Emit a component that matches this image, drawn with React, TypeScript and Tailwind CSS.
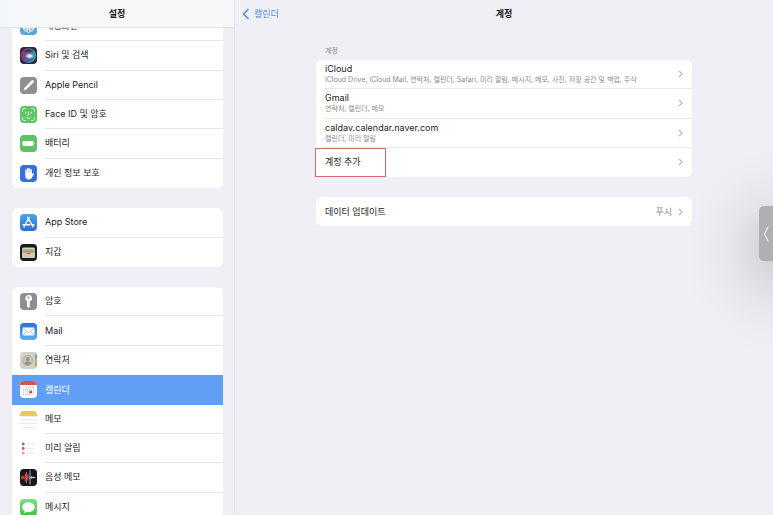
import type { ReactNode } from "react";
import clsx from "clsx";

type Item = { label: string; icon: ReactNode; active?: boolean };

const Icon = ({ children, className }: { children: ReactNode; className?: string }) => (
  <svg viewBox="0 0 34 34" aria-hidden="true" className={clsx("size-[17px] shrink-0 overflow-hidden rounded-[4px]", className)}>
    {children}
  </svg>
);

const WallpaperIcon = () => (
  <Icon className="bg-[#55a9d8]">
    <g fill="none" stroke="#fff" strokeWidth="1.8">
      <circle cx="17" cy="17" r="4" />
      <ellipse cx="17" cy="9" rx="4" ry="5" />
      <ellipse cx="17" cy="24" rx="4" ry="5" />
      <ellipse cx="9" cy="17" rx="5" ry="4" />
      <ellipse cx="25" cy="17" rx="5" ry="4" />
      <circle cx="11.5" cy="22" r="4" />
      <circle cx="22.5" cy="22" r="4" />
    </g>
  </Icon>
);

const SiriIcon = () => (
  <Icon>
    <defs>
      <radialGradient id="siriGlow">
        <stop offset="0" stopColor="#fff" />
        <stop offset="0.4" stopColor="#cfe2f4" stopOpacity="0.9" />
        <stop offset="1" stopColor="#5580b8" stopOpacity="0" />
      </radialGradient>
      <linearGradient id="siriBall" x1="0" y1="0" x2="1" y2="0.3">
        <stop offset="0" stopColor="#c22a66" />
        <stop offset="0.5" stopColor="#5a5088" />
        <stop offset="1" stopColor="#2fae9c" />
      </linearGradient>
    </defs>
    <rect width="34" height="34" fill="#33273c" />
    <circle cx="17" cy="17" r="15" fill="url(#siriBall)" />
    <path d="M8 8c5-4 13-4 18 0-6 3-12 3-18 0z" fill="#2a2c48" opacity="0.7" />
    <path d="M5 22c8 3 16 2 24-2-3 10-19 14-24 2z" fill="#3a62b4" opacity="0.85" />
    <ellipse cx="19" cy="18" rx="11" ry="7" fill="url(#siriGlow)" />
  </Icon>
);

const PencilIcon = () => (
  <Icon className="bg-[#8e8e93]">
    <path d="M7 27l2-5.5L23 7.200a2.800 2.800 0 0 1 4 4L12.500 25z" fill="#fff" />
  </Icon>
);

const FaceIcon = () => (
  <Icon className="bg-[#5ec466]">
    <g fill="none" stroke="#e9ffe9" strokeWidth="1.6" strokeLinecap="round">
      <path d="M5 11V8a3 3 0 0 1 3-3h3M23 5h3a3 3 0 0 1 3 3v3M29 23v3a3 3 0 0 1-3 3h-3M11 29H8a3 3 0 0 1-3-3v-3" />
      <path d="M11.5 12v3M22.5 12v3M17.5 12v6.5h-2M12 22.5c3 3 7 3 10 0" />
    </g>
  </Icon>
);

const BatteryIcon = () => (
  <Icon className="bg-[#5fc267]">
    <rect x="5" y="12" width="22" height="10" rx="2.5" fill="#fff" />
    <path d="M28.5 15v4c1.500-.5 1.500-3.500 0-4z" fill="#fff" />
  </Icon>
);

const HandIcon = () => (
  <Icon className="bg-[#3272d9]">
    <g stroke="#fff" strokeWidth="3" strokeLinecap="round">
      <path d="M12 18V10M15.500 17V7.500M19 17V7.500M22.500 18v-8" />
    </g>
    <path d="M10.500 16H24v3l2-2.500c1.500-1 2.500.5 2 1.500l-4 7c-2 4-5 4-7 4-4 0-6.500-3-6.500-7z" fill="#fff" />
  </Icon>
);

const AppStoreIcon = () => (
  <Icon className="bg-linear-to-b from-[#48a5e8] to-[#2b6fd6]">
    <g stroke="#fff" strokeWidth="2.800" strokeLinecap="round" fill="none">
      <path d="M18.500 7L10.500 21M15.500 7l10.500 18.500M6 21.500h13.500M24 21.500h4M8.800 24.500L8 26" />
    </g>
  </Icon>
);

const WalletIcon = () => (
  <Icon className="bg-[#1b1a18]">
    <rect x="4" y="7" width="26" height="21" rx="3" fill="#d8d3c0" />
    <path d="M5 10h24v3H5z" fill="#9bb3a4" />
    <path d="M5 13h24v3H5z" fill="#7fa865" />
    <path d="M5 16h24v3H5z" fill="#d9a35a" />
    <path d="M4 18h7c2 0 2 3 6 3s4-3 6-3h7v7a3 3 0 0 1-3 3H7a3 3 0 0 1-3-3z" fill="#cfcabb" />
    <path d="M12 18h10c-1 3.500-9 3.500-10 0z" fill="#cf6250" />
  </Icon>
);

const KeyIcon = () => (
  <Icon className="bg-[#8e8e93]">
    <path
      d="M17 4a6.500 6.500 0 0 0-3 12.200V27l3 3 3.500-3.500-2-2 2-2.500-1.500-2 1-3.500A6.500 6.500 0 0 0 17 4zm0 3a2 2 0 1 1 0 4 2 2 0 0 1 0-4z"
      fill="#fff"
      fillRule="evenodd"
    />
  </Icon>
);

const MailIcon = () => (
  <Icon className="bg-linear-to-b from-[#2f6fd6] to-[#52b4f0]">
    <rect x="5" y="9" width="24" height="16" rx="2.500" fill="#fff" />
    <path d="M6 10.500l9 8q2 1.700 4 0l9-8M6 24l7-7M28 24l-7-7" fill="none" stroke="#7db0e8" strokeWidth="1.300" />
  </Icon>
);

const ContactsIcon = () => (
  <Icon className="bg-[#d3d1c5]">
    <path d="M30 0h4v6h-4z" fill="#b5b4ac" />
    <path d="M30 6h4v8h-4z" fill="#5fa8d8" />
    <path d="M30 14h4v8h-4z" fill="#e8a54c" />
    <path d="M30 22h4v7h-4z" fill="#7cc07c" />
    <circle cx="15.500" cy="17" r="10" fill="#c9c7bb" stroke="#a3a196" strokeWidth="1.300" />
    <circle cx="15.500" cy="14" r="3.800" fill="#98968c" />
    <path d="M8.500 23c1-6 13-6 14 0-3 4.500-11 4.500-14 0z" fill="#98968c" />
  </Icon>
);

const CalendarIcon = () => (
  <Icon className="bg-white">
    <path d="M0 0h34v8H0z" fill="#df5247" />
    <g fill="none" stroke="#a9a9ae" strokeWidth="2" strokeDasharray="2 2">
      <path d="M6 17.500h23M6 22h23M6 26.500h15" />
    </g>
    <path d="M12 12.500h17" stroke="#e9a09b" strokeWidth="2" strokeDasharray="2 2" />
    <circle cx="21.500" cy="22" r="3" fill="#df4035" />
  </Icon>
);

const NotesIcon = () => (
  <Icon className="bg-[#fdfdfb]">
    <path d="M0 0h34v10H0z" fill="#e8cb5c" />
    <path d="M0 11h34" stroke="#cfc9b4" strokeWidth="1" strokeDasharray="1.500 1.500" />
    <path d="M0 17.500h34M0 25h34M0 33h34" stroke="#dededc" strokeWidth="1.300" />
  </Icon>
);

const RemindersIcon = () => (
  <Icon className="bg-white">
    <path d="M12 8h19M12 17h19M12 26h19" stroke="#dcdce0" strokeWidth="1.300" />
    <circle cx="6.500" cy="8" r="2.800" fill="#5874b8" />
    <circle cx="6.500" cy="17" r="2.800" fill="#cf5a50" />
    <circle cx="6.500" cy="26" r="2.800" fill="#f0a078" />
  </Icon>
);

const VoiceIcon = () => (
  <Icon className="bg-[#17171b]">
    <path d="M3 15v4M5.500 13v8M8 14v6M10.500 9v16M13 6v22M15.500 11v12M18 14v6" stroke="#dc544c" strokeWidth="2" />
    <path d="M20 3v28" stroke="#a9cdea" strokeWidth="1.800" />
    <path d="M20 17h11M23.500 14v6M27 15.500v3" stroke="#dedee2" strokeWidth="1.500" />
  </Icon>
);

const MessagesIcon = () => (
  <Icon className="bg-linear-to-b from-[#7ee07b] to-[#43bf4d]">
    <path
      d="M17 6.500c-7 0-12.500 4.300-12.500 9.800 0 3.500 2 6.300 5 8-.3 1.700-1 2.700-2 3.700 2.500 0 4.300-1 5.700-2.300 1.200.3 2.500.4 3.800.4 7 0 12.500-4.300 12.500-9.800S24 6.500 17 6.500z"
      fill="#fff"
    />
  </Icon>
);

const general: Item[] = [
  { label: "배경화면", icon: <WallpaperIcon /> },
  { label: "Siri 및 검색", icon: <SiriIcon /> },
  { label: "Apple Pencil", icon: <PencilIcon /> },
  { label: "Face ID 및 암호", icon: <FaceIcon /> },
  { label: "배터리", icon: <BatteryIcon /> },
  { label: "개인 정보 보호", icon: <HandIcon /> },
];

const store: Item[] = [
  { label: "App Store", icon: <AppStoreIcon /> },
  { label: "지갑", icon: <WalletIcon /> },
];

const apps: Item[] = [
  { label: "암호", icon: <KeyIcon /> },
  { label: "Mail", icon: <MailIcon /> },
  { label: "연락처", icon: <ContactsIcon /> },
  { label: "캘린더", icon: <CalendarIcon />, active: true },
  { label: "메모", icon: <NotesIcon /> },
  { label: "미리 알림", icon: <RemindersIcon /> },
  { label: "음성 메모", icon: <VoiceIcon /> },
  { label: "메시지", icon: <MessagesIcon /> },
];

const accounts = [
  {
    name: "iCloud",
    detail: "iCloud Drive, iCloud Mail, 연락처, 캘린더, Safari, 미리 알림, 메시지, 메모, 사진, 저장 공간 및 백업, 주식",
  },
  { name: "Gmail", detail: "연락처, 캘린더, 메모" },
  { name: "caldav.calendar.naver.com", detail: "캘린더, 미리 알림" },
];

const Chevron = () => (
  <svg viewBox="0 0 6 10" aria-hidden="true" className="h-2 w-[5px] shrink-0 fill-none stroke-[#b9b9be]">
    <path d="M1 1l4 4-4 4" strokeWidth="1.500" />
  </svg>
);

const MenuGroup = ({ items, className }: { items: Item[]; className: string }) => (
  <ul className={clsx("flex shrink-0 flex-col overflow-hidden rounded-md bg-white", className)}>
    {items.map((item, i) => (
      <li key={item.label} className="flex-1">
        <a href="#" className={clsx("flex h-full items-center gap-2 pl-2", item.active && "bg-[#619ff7] text-white")}>
          {item.icon}
          <span
            className={clsx(
              "flex h-full flex-1 items-center",
              i < items.length - 1 && !item.active && !items[i + 1].active && "border-b border-[#e6e6e9]"
            )}
          >
            {item.label}
          </span>
        </a>
      </li>
    ))}
  </ul>
);

const Sidebar = () => (
  <aside className="flex w-[235px] shrink-0 flex-col border-r border-[#e2e1e7]">
    <header className="z-10 flex h-7 shrink-0 items-center justify-center border-b border-[#e3e3e6] bg-linear-to-r from-[#f3f7fb] via-[#f8f8f9] via-30% to-[#f8f8f9]">
      <h1 className="font-semibold">설정</h1>
    </header>
    <nav className="-mt-4 flex min-h-0 flex-1 flex-col gap-5 overflow-hidden pr-[11px] pl-3">
      <MenuGroup items={general} className="h-[176px]" />
      <MenuGroup items={store} className="h-[59px]" />
      <MenuGroup items={apps} className="h-[235px]" />
    </nav>
  </aside>
);

export default function App() {
  return (
    <div className="relative flex h-screen overflow-hidden bg-[#f0eff5] font-['Inter','Noto_Sans_CJK_KR',sans-serif] text-[9px] leading-3 text-[#1c1c1e]">
      <Sidebar />

      <main className="min-w-0 flex-1">
        <header className="grid h-7 grid-cols-3 items-center px-[7px]">
          <a href="#" className="flex items-center gap-1 text-[#4c8fe0]">
            <svg viewBox="0 0 8 12" aria-hidden="true" className="h-3 w-2 fill-none stroke-current">
              <path d="M6.500 1L1.500 6l5 5" strokeWidth="1.500" />
            </svg>
            캘린더
          </a>
          <h2 className="text-center font-semibold">계정</h2>
        </header>

        <div className="px-[81px] pt-[17px]">
          <h3 className="mb-[3px] pl-[9px] text-[7px] text-[#8a8a8f]">계정</h3>
          <ul className="grid h-[117px] grid-rows-4 rounded-md bg-white">
            {accounts.map((account) => (
              <li key={account.name} className="pl-[9px]">
                <a href="#" className="flex h-full items-center justify-between border-b border-[#e9e9ec] pr-[9px]">
                  <div className="whitespace-nowrap">
                    <p>{account.name}</p>
                    <p className="text-[7px] leading-[10px] text-[#8a8a8f]">{account.detail}</p>
                  </div>
                  <Chevron />
                </a>
              </li>
            ))}
            <li className="relative">
              <a href="#" className="flex h-full items-center justify-between px-[9px]">
                계정 추가
                <Chevron />
              </a>
              <span className="pointer-events-none absolute inset-y-0 -left-px w-[71px] border border-[#d9656d]" />
            </li>
          </ul>

          <a href="#" className="mt-5 flex h-[29px] items-center rounded-md bg-white px-[9px]">
            <span className="flex-1">데이터 업데이트</span>
            <span className="mr-[6px] text-[#8a8a8f]">푸시</span>
            <Chevron />
          </a>
        </div>
      </main>

      <div className="pointer-events-none absolute top-[140px] right-0 h-[220px] w-[90px] bg-[radial-gradient(ellipse_90px_110px_at_right_center,#cdcdd2,#dcdbe1_25%,#e7e6ec_50%,#edecf2_75%,#f0eff500)]" />
      <button
        type="button"
        aria-label="열기"
        className="absolute top-[206px] right-0 flex h-[55px] w-[14px] items-center justify-center rounded-l-[5px] bg-[#b0b0b1]"
      >
        <svg viewBox="0 0 6 16" aria-hidden="true" className="h-4 w-[6px] fill-none stroke-[#e6e6e6]">
          <path d="M5 1L1.500 8 5 15" strokeWidth="1.500" strokeLinecap="round" strokeLinejoin="round" />
        </svg>
      </button>
    </div>
  );
}
